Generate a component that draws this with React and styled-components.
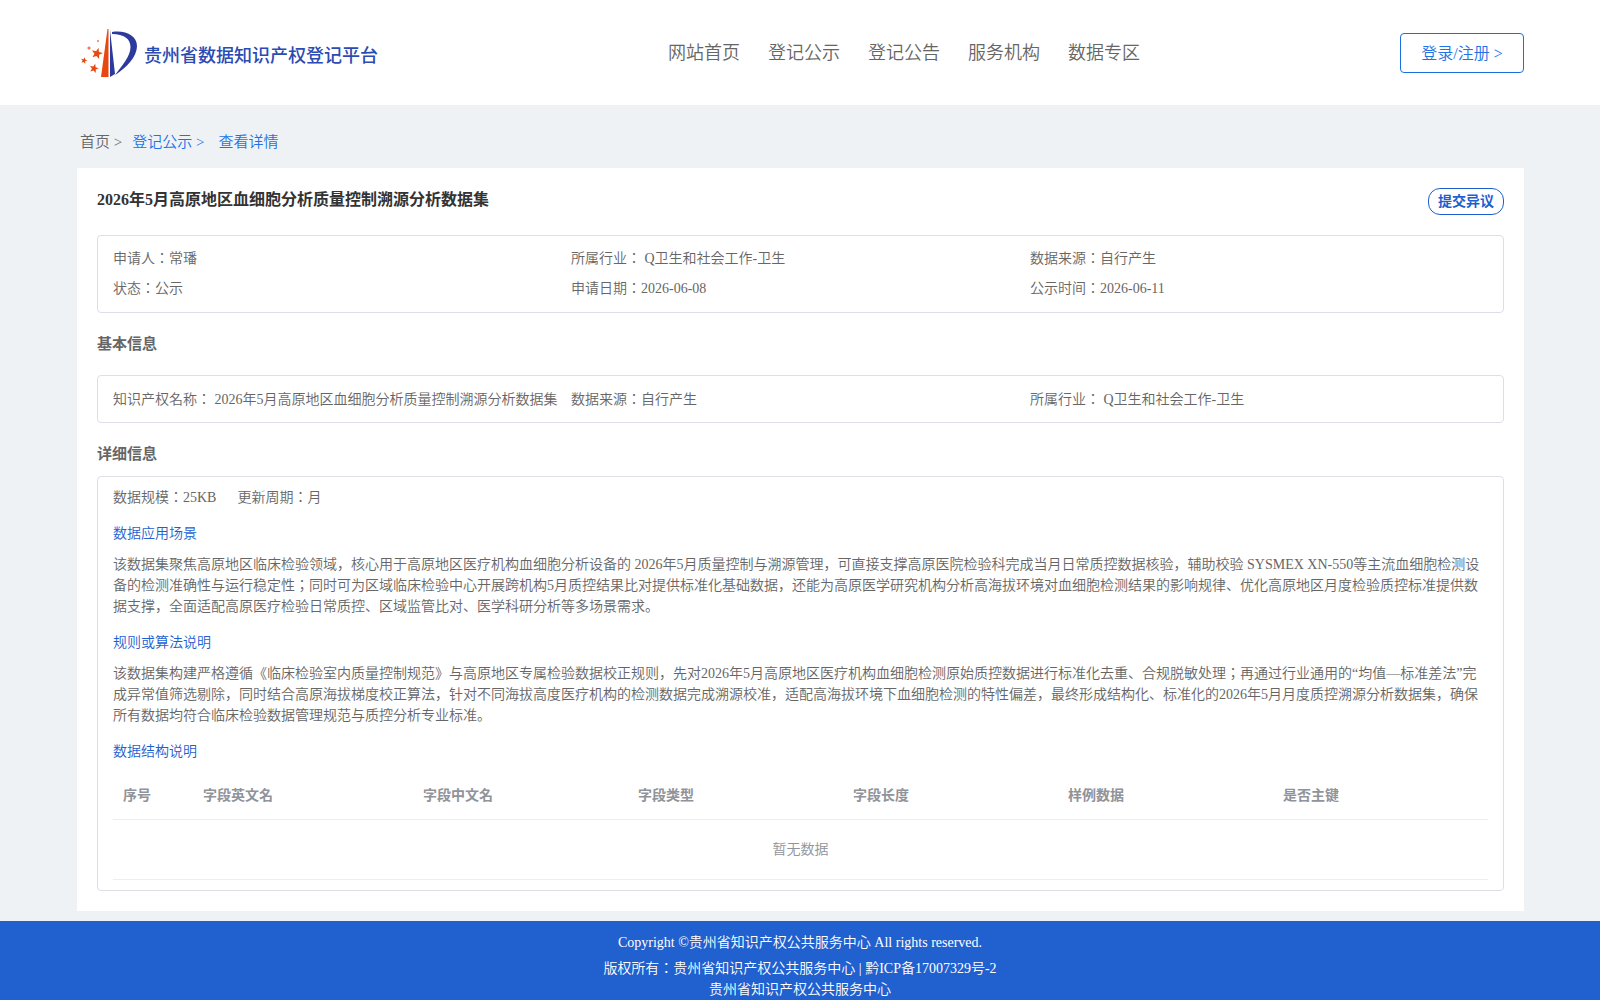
import React from 'react';
import styled, { createGlobalStyle } from 'styled-components';

const GlobalStyle = createGlobalStyle`
  html, body { margin: 0; padding: 0; }
  body {
    background: #eff2f5;
    color: #666;
    font-family: "Liberation Serif", "Noto Sans CJK JP", serif;
    font-size: 14px;
    font-weight: 350;
  }
  * { box-sizing: border-box; }
`;

const Header = styled.header`
  height: 105px;
  background: #fff;
  padding: 0 76px 0 80px;
  display: grid;
  grid-template-columns: 588px auto 1fr;
  align-items: center;
`;

const Brand = styled.div`
  display: flex;
  align-items: center;
  gap: 6px;
`;

const BrandName = styled.span`
  font-size: 18px;
  font-weight: 500;
  color: #2b4bb3;
  font-family: "Noto Sans CJK JP", sans-serif;
  margin-top: 2px;
`;

const Nav = styled.nav`
  display: flex;
  gap: 28px;
  margin-bottom: 3px;
`;

const NavLink = styled.a`
  font-size: 18px;
  color: #666;
  font-family: "Noto Sans CJK JP", sans-serif;
`;

const LoginButton = styled.a`
  justify-self: end;
  width: 124px;
  height: 40px;
  padding-bottom: 1px;
  border: 1px solid #1a6fe0;
  border-radius: 4px;
  color: #2272e6;
  font-size: 16px;
  display: flex;
  align-items: center;
  justify-content: center;
`;

const Crumbs = styled.div`
  height: 63px;
  padding: 8px 0 0 80px;
  display: flex;
  align-items: center;
  font-size: 15px;
`;

const Crumb = styled.span`
  color: ${(p) => (p.$active ? '#2272e6' : '#666')};
  margin-right: ${(p) => p.$gap || 0}px;
`;

const Card = styled.main`
  margin: 0 76px 10px 77px;
  background: #fff;
  padding: 20px 20px 20px;
`;

const TitleRow = styled.div`
  display: flex;
  justify-content: space-between;
  align-items: flex-start;
  height: 47px;
`;

const Title = styled.h1`
  margin: 1px 0 0;
  font-size: 16px;
  line-height: 22px;
  font-weight: 700;
  color: #333;
`;

const ObjectionButton = styled.button`
  width: 76px;
  height: 27px;
  padding: 0 0 3px;
  border: 1px solid #1d5fcf;
  border-radius: 12px;
  background: #fff;
  color: #1d5fcf;
  font: 700 14px "Liberation Serif", "Noto Sans CJK JP", serif;
`;

const Panel = styled.section`
  border: 1px solid #dcdfe6;
  border-radius: 4px;
  padding: ${(p) => p.$padding || '0 15px'};
`;

const InfoRow = styled.div`
  display: grid;
  grid-template-columns: 458px 459px 1fr;
  height: ${(p) => p.$height || 30}px;
  align-items: center;
`;

const SectionLabel = styled.h2`
  margin: 0;
  font-size: 15px;
  font-weight: 700;
  color: #666;
  line-height: 20px;
  padding: ${(p) => p.$padding};
`;

const Stats = styled.div`
  display: flex;
  gap: 21px;
  height: 38px;
  align-items: center;
`;

const SubHeading = styled.h3`
  margin: 0;
  font-size: 14px;
  font-weight: 350;
  color: #1d5fcf;
  line-height: 20px;
  padding: ${(p) => p.$padding || '0'};
`;

const Paragraph = styled.p`
  margin: 0;
  line-height: 21px;
  padding: 10px 0 16px;
`;

const TableHead = styled.div`
  display: grid;
  grid-template-columns: 80px 220px 215px 215px 215px 215px 1fr;
  height: 51px;
  align-items: center;
  border-bottom: 1px solid #ebeef5;
  margin-top: 7px;
  font-weight: 700;
  color: #909399;
`;

const HeadCell = styled.div`
  padding-left: 10px;
`;

const EmptyRow = styled.div`
  height: 60px;
  padding-bottom: 3px;
  display: flex;
  align-items: center;
  justify-content: center;
  border-bottom: 1px solid #ebeef5;
  color: #909399;
  margin-bottom: 10px;
`;

const Footer = styled.footer`
  background: #2060cf;
  color: #fff;
  text-align: center;
  height: 79px;
  padding-top: 11px;
  overflow: hidden;
`;

const FooterLine = styled.div`
  line-height: 21px;
  margin-bottom: ${(p) => p.$gap || 0}px;
`;

const star = (cx, cy, r) => {
  const pts = [];
  for (let i = 0; i < 10; i++) {
    const radius = i % 2 ? r * 0.42 : r;
    const a = (Math.PI / 5) * i - Math.PI / 2 + 0.25;
    pts.push(`${(cx + radius * Math.cos(a)).toFixed(1)},${(cy + radius * Math.sin(a)).toFixed(1)}`);
  }
  return pts.join(' ');
};

const Logo = () => (
  <svg width="58" height="52" viewBox="0 0 58 52">
    <polygon points="21,50 27.5,2 28.5,2 28.5,50" fill="#e8470f" />
    <polygon points="30,3 35,47 30,50" fill="#2b3a9c" />
    <path d="M32 5 C46 3 57 9 57 19 C57 30 46 41 35 48 C42 39 50.5 29 50.5 20 C50.5 12 44 7 32 7 Z" fill="#2b3a9c" />
    <polygon points={star(17, 26.5, 6)} fill="#e8470f" />
    <polygon points={star(4, 33.5, 3.4)} fill="#e8470f" />
    <polygon points={star(14, 41.5, 4.8)} fill="#e8470f" />
    <circle cx="9" cy="21" r="1.6" fill="#ee7a50" />
    <circle cx="18" cy="14" r="1" fill="#ee7a50" />
  </svg>
);

const columns = ['序号', '字段英文名', '字段中文名', '字段类型', '字段长度', '样例数据', '是否主键'];

export default function App() {
  return (
    <>
      <GlobalStyle />
      <Header>
        <Brand>
          <Logo />
          <BrandName>贵州省数据知识产权登记平台</BrandName>
        </Brand>
        <Nav>
          <NavLink>网站首页</NavLink>
          <NavLink>登记公示</NavLink>
          <NavLink>登记公告</NavLink>
          <NavLink>服务机构</NavLink>
          <NavLink>数据专区</NavLink>
        </Nav>
        <LoginButton>登录/注册 &gt;</LoginButton>
      </Header>
      <Crumbs>
        <Crumb $gap={10}>首页 &gt;</Crumb>
        <Crumb $active $gap={14}>登记公示 &gt;</Crumb>
        <Crumb $active>查看详情</Crumb>
      </Crumbs>
      <Card>
        <TitleRow>
          <Title>2026年5月高原地区血细胞分析质量控制溯源分析数据集</Title>
          <ObjectionButton>提交异议</ObjectionButton>
        </TitleRow>
        <Panel $padding="6px 15px 10px">
          <InfoRow>
            <span>申请人：常璠</span>
            <span>所属行业： Q卫生和社会工作-卫生</span>
            <span>数据来源：自行产生</span>
          </InfoRow>
          <InfoRow>
            <span>状态：公示</span>
            <span>申请日期：2026-06-08</span>
            <span>公示时间：2026-06-11</span>
          </InfoRow>
        </Panel>
        <SectionLabel $padding="21px 0 21px">基本信息</SectionLabel>
        <Panel $padding="0 15px 2px">
          <InfoRow $height={44}>
            <span>知识产权名称： 2026年5月高原地区血细胞分析质量控制溯源分析数据集</span>
            <span>数据来源：自行产生</span>
            <span>所属行业： Q卫生和社会工作-卫生</span>
          </InfoRow>
        </Panel>
        <SectionLabel $padding="21px 0 12px">详细信息</SectionLabel>
        <Panel>
          <Stats>
            <span>数据规模：25KB</span>
            <span>更新周期：月</span>
          </Stats>
          <SubHeading $padding="9px 0 0">数据应用场景</SubHeading>
          <Paragraph>该数据集聚焦高原地区临床检验领域，核心用于高原地区医疗机构血细胞分析设备的 2026年5月质量控制与溯源管理，可直接支撑高原医院检验科完成当月日常质控数据核验，辅助校验 SYSMEX XN-550等主流血细胞检测设备的检测准确性与运行稳定性；同时可为区域临床检验中心开展跨机构5月质控结果比对提供标准化基础数据，还能为高原医学研究机构分析高海拔环境对血细胞检测结果的影响规律、优化高原地区月度检验质控标准提供数据支撑，全面适配高原医疗检验日常质控、区域监管比对、医学科研分析等多场景需求。</Paragraph>
          <SubHeading>规则或算法说明</SubHeading>
          <Paragraph>该数据集构建严格遵循《临床检验室内质量控制规范》与高原地区专属检验数据校正规则，先对2026年5月高原地区医疗机构血细胞检测原始质控数据进行标准化去重、合规脱敏处理；再通过行业通用的“均值—标准差法”完成异常值筛选剔除，同时结合高原海拔梯度校正算法，针对不同海拔高度医疗机构的检测数据完成溯源校准，适配高海拔环境下血细胞检测的特性偏差，最终形成结构化、标准化的2026年5月月度质控溯源分析数据集，确保所有数据均符合临床检验数据管理规范与质控分析专业标准。</Paragraph>
          <SubHeading>数据结构说明</SubHeading>
          <TableHead>
            {columns.map((c) => <HeadCell key={c}>{c}</HeadCell>)}
          </TableHead>
          <EmptyRow>暂无数据</EmptyRow>
        </Panel>
      </Card>
      <Footer>
        <FooterLine $gap={5}>Copyright ©贵州省知识产权公共服务中心 All rights reserved.</FooterLine>
        <FooterLine>版权所有：贵州省知识产权公共服务中心 | 黔ICP备17007329号-2</FooterLine>
        <FooterLine>贵州省知识产权公共服务中心</FooterLine>
      </Footer>
    </>
  );
}
